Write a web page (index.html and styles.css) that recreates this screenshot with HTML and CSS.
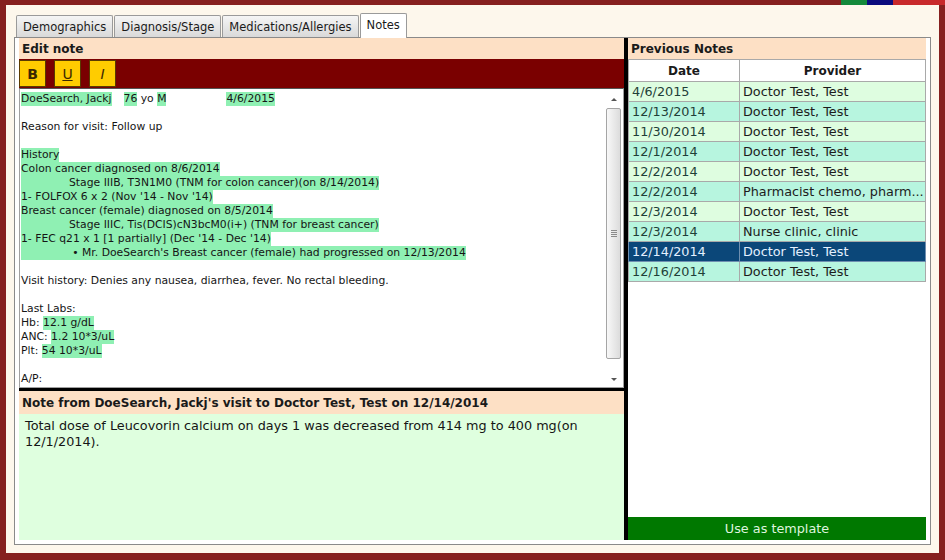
FILE: index.html
```html
<!DOCTYPE html>
<html>
<head>
<meta charset="utf-8">
<title>Notes</title>
<link rel="stylesheet" href="styles.css">
</head>
<body>
<div class="window">
  <div class="topbar">
    <span class="s-fill"></span><span class="s-green"></span><span class="s-navy"></span><span class="s-red"></span>
  </div>
  <div class="client">
    <div class="tabs">
      <div class="tab">Demographics</div>
      <div class="tab">Diagnosis/Stage</div>
      <div class="tab">Medications/Allergies</div>
      <div class="tab active">Notes</div>
    </div>
    <div class="panel">
      <div class="left">
        <div class="hdr">Edit note</div>
        <div class="toolbar">
          <div class="tb tb-b">B</div>
          <div class="tb tb-u">U</div>
          <div class="tb tb-i">I</div>
        </div>
        <div class="editor">
          <div class="text">
            <div class="line"><span class="hl">DoeSearch, Jackj</span><span class="hl g1">76</span> yo <span class="hl">M</span><span class="hl g2">4/6/2015</span></div>
            <div class="line"></div>
            <div class="line">Reason for visit: Follow up</div>
            <div class="line"></div>
            <div class="line"><span class="hl">History</span></div>
            <div class="line"><span class="hl">Colon cancer diagnosed on 8/6/2014</span></div>
            <div class="line"><span class="hl ind">Stage IIIB, T3N1M0 (TNM for colon cancer)(on 8/14/2014)</span></div>
            <div class="line"><span class="hl">1- FOLFOX 6 x 2 (Nov '14 - Nov '14)</span></div>
            <div class="line"><span class="hl">Breast cancer (female) diagnosed on 8/5/2014</span></div>
            <div class="line"><span class="hl ind">Stage IIIC, Tis(DCIS)cN3bcM0(i+) (TNM for breast cancer)</span></div>
            <div class="line"><span class="hl">1- FEC q21 x 1 [1 partially] (Dec '14 - Dec '14)</span></div>
            <div class="line"><span class="hl ind"><span class="bul">•</span>Mr. DoeSearch's Breast cancer (female) had progressed on 12/13/2014</span></div>
            <div class="line"></div>
            <div class="line">Visit history: Denies any nausea, diarrhea, fever. No rectal bleeding.</div>
            <div class="line"></div>
            <div class="line">Last Labs:</div>
            <div class="line">Hb: <span class="hl">12.1 g/dL</span></div>
            <div class="line">ANC: <span class="hl">1.2 10*3/uL</span></div>
            <div class="line">Plt: <span class="hl">54 10*3/uL</span></div>
            <div class="line"></div>
            <div class="line">A/P:</div>
          </div>
          <div class="scroll">
            <div class="sb-btn"><span class="arr-up"></span></div>
            <div class="thumb"><span class="grip"></span></div>
            <div class="track"></div>
            <div class="sb-btn"><span class="arr-down"></span></div>
          </div>
        </div>
        <div class="hdr note-hdr">Note from DoeSearch, Jackj's visit to Doctor Test, Test on 12/14/2014</div>
        <div class="note-body">Total dose of Leucovorin calcium on days 1 was decreased from 414 mg to 400 mg(on 12/1/2014).</div>
      </div>
      <div class="right">
        <div class="hdr">Previous Notes</div>
        <table class="notes">
          <colgroup><col class="c-date"><col class="c-prov"></colgroup>
          <thead>
            <tr><th>Date</th><th>Provider</th></tr>
          </thead>
          <tbody>
            <tr class="r1"><td>4/6/2015</td><td>Doctor Test, Test</td></tr>
            <tr class="r2"><td>12/13/2014</td><td>Doctor Test, Test</td></tr>
            <tr class="r1"><td>11/30/2014</td><td>Doctor Test, Test</td></tr>
            <tr class="r2"><td>12/1/2014</td><td>Doctor Test, Test</td></tr>
            <tr class="r1"><td>12/2/2014</td><td>Doctor Test, Test</td></tr>
            <tr class="r2"><td>12/2/2014</td><td>Pharmacist chemo, pharm...</td></tr>
            <tr class="r1"><td>12/3/2014</td><td>Doctor Test, Test</td></tr>
            <tr class="r2"><td>12/3/2014</td><td>Nurse clinic, clinic</td></tr>
            <tr class="sel"><td>12/14/2014</td><td>Doctor Test, Test</td></tr>
            <tr class="r2"><td>12/16/2014</td><td>Doctor Test, Test</td></tr>
          </tbody>
        </table>
        <div class="spacer"></div>
        <div class="use">Use as template</div>
      </div>
    </div>
  </div>
</div>
</body>
</html>
```
FILE: styles.css
```css
html, body {
  margin: 0;
  padding: 0;
}
body {
  font-family: "DejaVu Sans", "Liberation Sans", sans-serif;
  background: #86201f;
  color: #111;
}
.window {
  width: 945px;
  height: 560px;
  display: flex;
  flex-direction: column;
  background: #86201f;
}
.topbar {
  height: 5px;
  flex: none;
  display: flex;
}
.s-fill { flex: 1; }
.s-green { width: 26px; background: #14893b; }
.s-navy { width: 26px; background: #0b0b7e; }
.s-red { width: 52px; background: #c8292b; }

.client {
  flex: 1;
  min-height: 0;
  margin: 0 6px 7px 6px;
  background: #fdf7ec;
  padding: 8px;
  display: flex;
  flex-direction: column;
}
.tabs {
  height: 24px;
  flex: none;
  display: flex;
  align-items: flex-end;
  padding-left: 2px;
  position: relative;
  z-index: 1;
}
.tab {
  height: 22px;
  box-sizing: border-box;
  border: 1px solid #9a9a9a;
  border-bottom: none;
  padding: 0 6px;
  margin-right: 1px;
  font-size: 11.5px;
  line-height: 22px;
  background: linear-gradient(#f5f5f5, #d9d9d9);
  color: #1a1a1a;
  border-radius: 2px 2px 0 0;
}
.tab.active {
  height: 25px;
  margin-bottom: -1px;
  background: #fff;
  line-height: 22px;
}
.panel {
  flex: 1;
  min-height: 0;
  border: 1px solid #8a8a8a;
  background: #fff;
  padding: 0 4px 4px 4px;
  display: flex;
}
.left {
  width: 605px;
  display: flex;
  flex-direction: column;
}
.right {
  width: 298px;
  border-left: 4px solid #000;
  display: flex;
  flex-direction: column;
}
.hdr {
  flex: none;
  background: #fde0c5;
  font-weight: bold;
  font-size: 12px;
  height: 21px;
  line-height: 23px;
  padding-left: 3px;
  color: #1a1a1a;
  white-space: nowrap;
  overflow: hidden;
}
.toolbar {
  flex: none;
  height: 29px;
  background: #7a0000;
  display: flex;
  align-items: center;
  gap: 8px;
}
.tb {
  width: 27px;
  height: 27px;
  box-sizing: border-box;
  background: #ffcc00;
  border: 1px solid #5a3a00;
  font-size: 14px;
  color: #3a2800;
  display: flex;
  align-items: center;
  justify-content: center;
}
.tb-b { font-weight: bold; }
.tb-u { text-decoration: underline; }
.tb-i { font-style: italic; }

.editor {
  flex: none;
  height: 300px;
  box-sizing: border-box;
  border: 1px solid #a0a0a0;
  border-top-color: #555;
  display: flex;
  background: #fff;
}
.text {
  flex: 1;
  padding: 3px 0 0 1px;
  font-size: 10.8px;
  line-height: 14px;
  color: #151515;
  overflow: hidden;
}
.line {
  height: 14px;
  white-space: pre;
}
.hl {
  display: inline-block;
  height: 14px;
  background: #8ff0b3;
  vertical-align: top;
}
.g1 { margin-left: 12px; }
.g2 { margin-left: 60px; }
.ind { padding-left: 48px; }
.bul {
  display: inline-block;
  width: 13px;
  text-align: center;
}
.scroll {
  width: 15px;
  margin: 2px 2px 0 0;
  display: flex;
  flex-direction: column;
}
.sb-btn {
  height: 16px;
  flex: none;
  display: flex;
  align-items: center;
  justify-content: center;
}
.arr-up {
  width: 0;
  height: 0;
  border-left: 3px solid transparent;
  border-right: 3px solid transparent;
  border-bottom: 3px solid #555;
}
.arr-down {
  width: 0;
  height: 0;
  border-left: 3px solid transparent;
  border-right: 3px solid transparent;
  border-top: 3px solid #555;
}
.thumb {
  flex: none;
  height: 251px;
  margin-top: 1px;
  box-sizing: border-box;
  border: 1px solid #a5a5a5;
  border-radius: 2px;
  background: linear-gradient(to right, #f8f8f8, #dcdcdc);
  display: flex;
  align-items: center;
  justify-content: center;
}
.grip {
  width: 6px;
  height: 7px;
  background: repeating-linear-gradient(to bottom, #8a8a8a 0 1px, transparent 1px 2px);
}
.track { flex: 1; }

.note-hdr {
  border-top: 3px solid #000;
  height: 23px;
  line-height: 24px;
}
.note-body {
  flex: 1;
  background: #dfffdf;
  font-size: 12.8px;
  line-height: 16px;
  padding: 4px 20px 0 6px;
  color: #151515;
}

.notes {
  border-collapse: collapse;
  width: 298px;
  table-layout: fixed;
  font-size: 12.8px;
}
.c-date { width: 111px; }
.notes th, .notes td {
  border: 1px solid #a9a9a9;
  padding: 0 3px;
  white-space: nowrap;
  overflow: hidden;
  text-align: left;
}
.notes th {
  height: 21px;
  font-size: 12px;
  font-weight: bold;
  text-align: center;
  background: #fff;
  color: #1a1a1a;
}
.notes td {
  height: 19px;
  color: #1c1c1c;
}
.notes tr.r1 td { background: #defde0; }
.notes tr.r2 td { background: #b7f5df; }
.notes tr.r1 td:first-child, .notes tr.r2 td:first-child { color: #1f3f38; }
.notes tr.sel td {
  background: #0b4779;
  color: #e3f0ff;
  border-color: #6f8fb0;
}
.spacer { flex: 1; }
.use {
  flex: none;
  height: 23px;
  line-height: 23px;
  background: #007800;
  color: #dff5df;
  font-size: 12.8px;
  text-align: center;
}
```
